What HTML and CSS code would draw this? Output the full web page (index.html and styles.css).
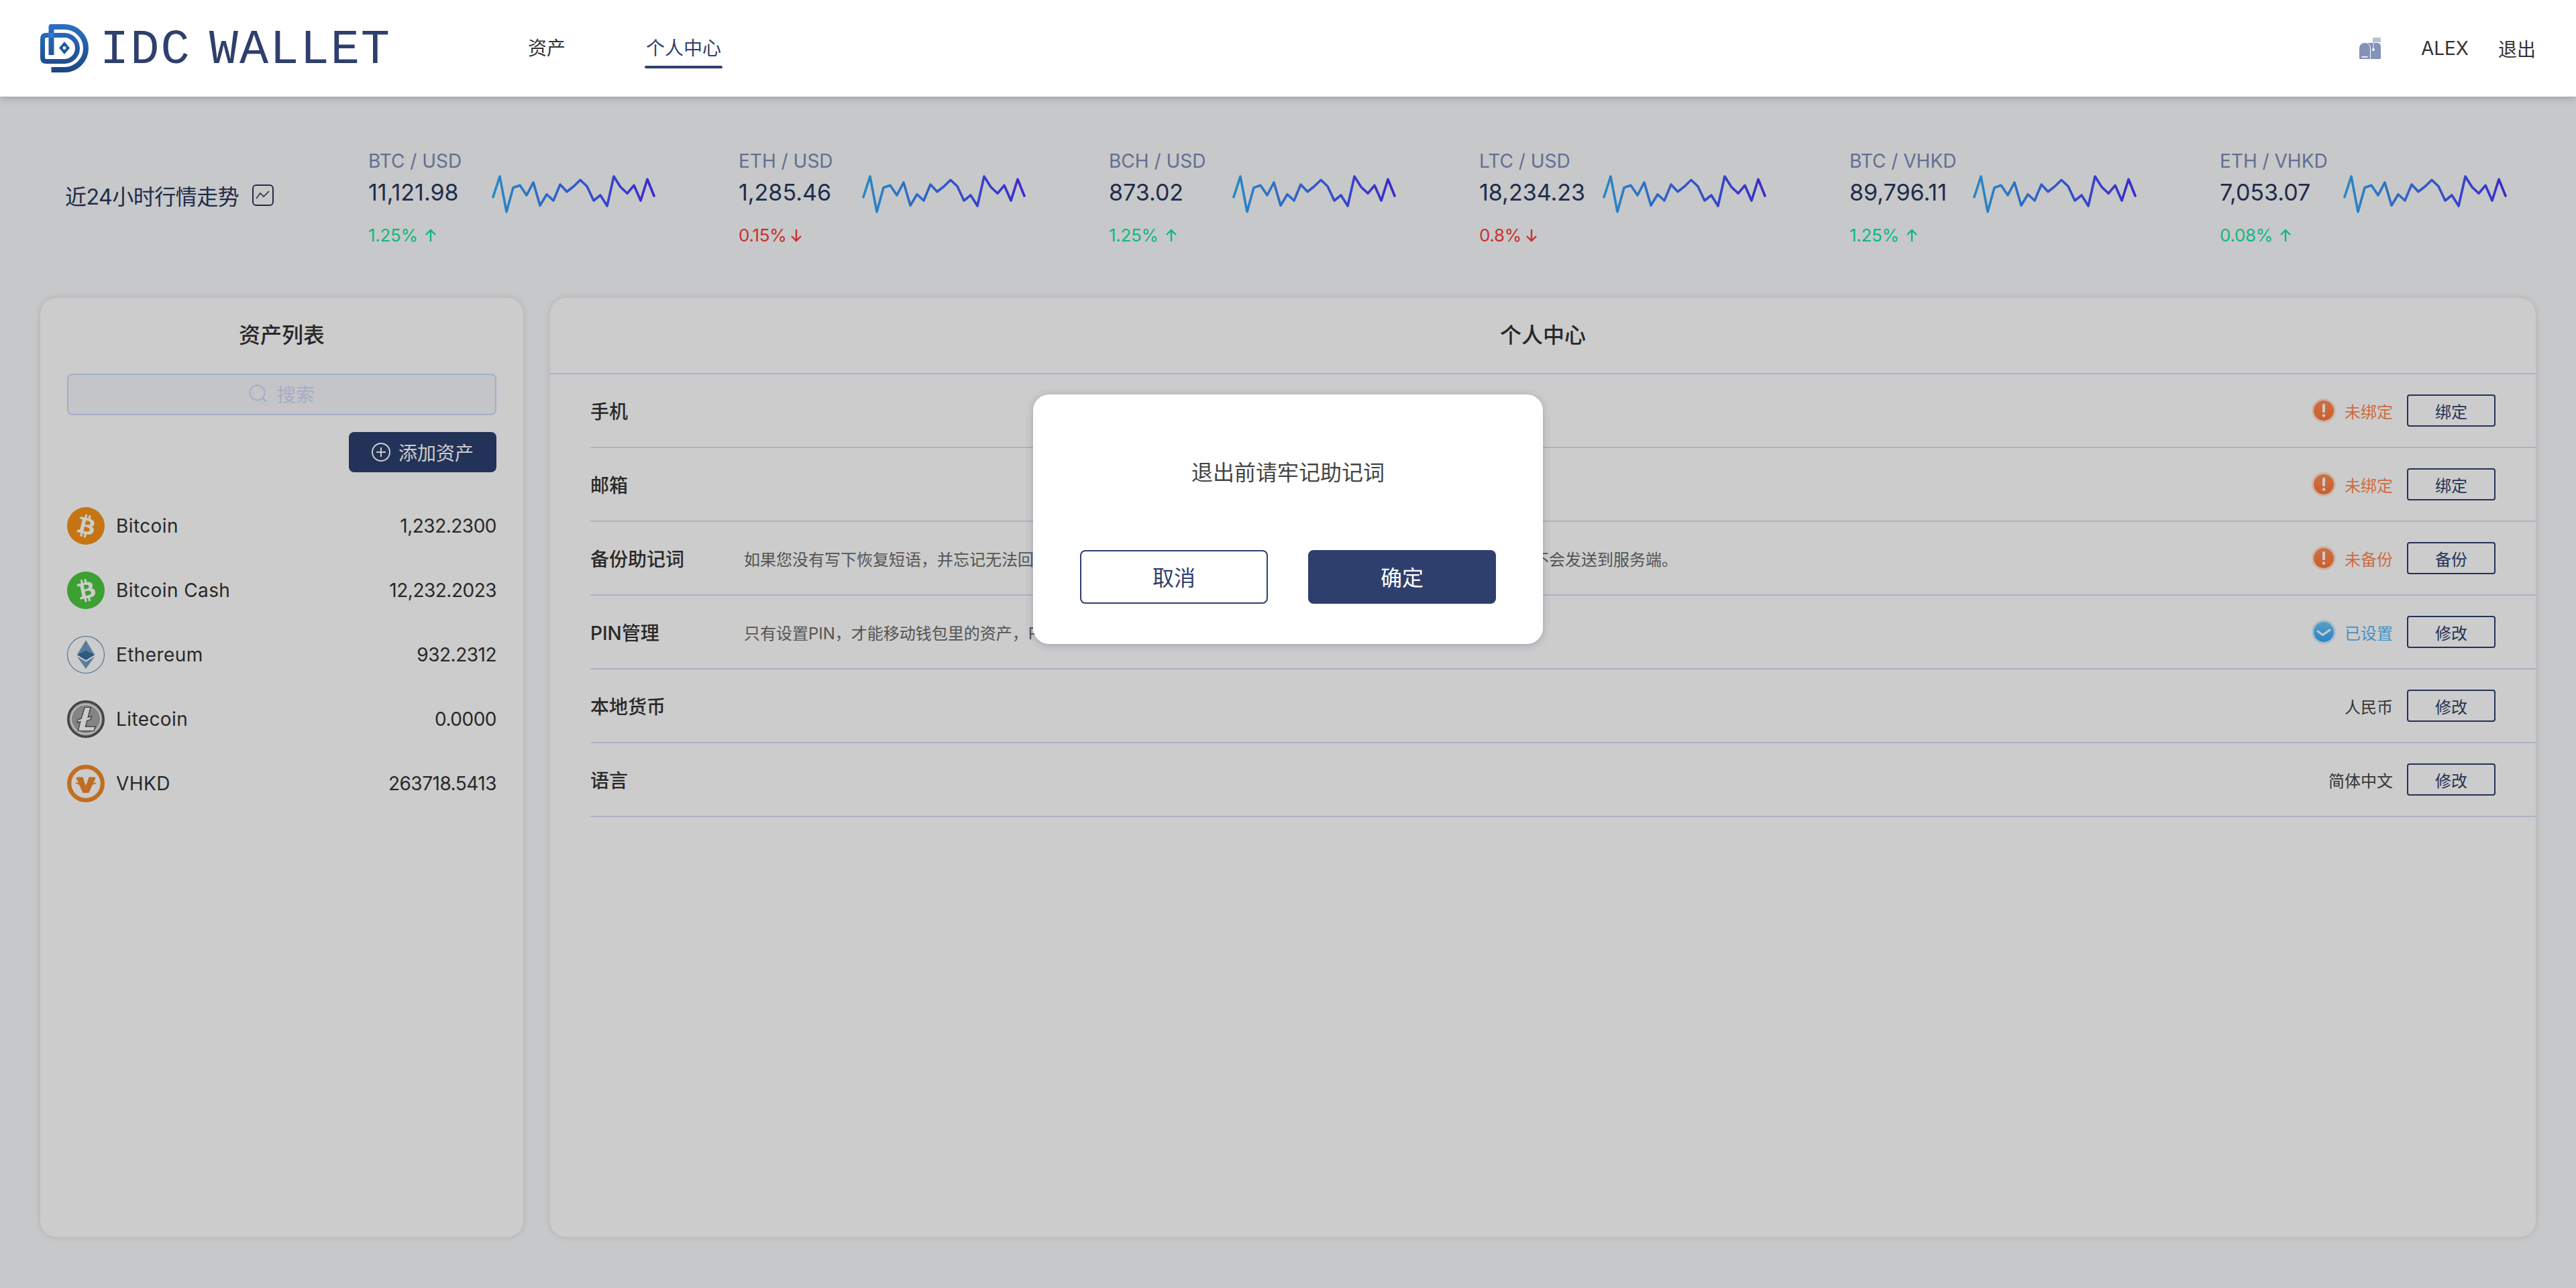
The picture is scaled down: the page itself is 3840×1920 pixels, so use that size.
FILE: index.html
```html
<!DOCTYPE html>
<html lang="zh-CN">

<head>
    <meta charset="UTF-8">
    <title>IDC Wallet</title>
    <link rel="stylesheet" href="styles.css">
</head>

<body>
    <svg class="defs" width="0" height="0">
        <defs>
            <linearGradient id="sparkGrad" gradientUnits="userSpaceOnUse" x1="0" y1="0" x2="244" y2="0">
                <stop offset="0" stop-color="#33acf5" />
                <stop offset="1" stop-color="#4a34ff" />
            </linearGradient>
            <linearGradient id="logoGrad" gradientUnits="userSpaceOnUse" x1="0" y1="0" x2="0" y2="72">
                <stop offset="0" stop-color="#2a70c6" />
                <stop offset="1" stop-color="#1a4780" />
            </linearGradient>
            <linearGradient id="warnGrad" x1="0" y1="0" x2="0" y2="1">
                <stop offset="0" stop-color="#ff8e56" />
                <stop offset="1" stop-color="#ff7636" />
            </linearGradient>
            <linearGradient id="okGrad" x1="0" y1="0" x2="0" y2="1">
                <stop offset="0" stop-color="#74c4f6" />
                <stop offset="1" stop-color="#32a8f8" />
            </linearGradient>
            <symbol id="spark" viewBox="0 0 244 58">
                <polyline fill="none" stroke="url(#sparkGrad)" stroke-width="3.6" stroke-linecap="round"
                    stroke-linejoin="round"
                    points="2,33.7 12,3 22,55.7 32,19.7 42,16.3 52,31 62,12 72,46.3 82,29.7 92,39 102,15 112,25.7 122,18 132,8.3 142,17.7 152,39 162,31 172,47 182,3 192,18.7 202,28.3 212,16.3 222,39 232,7.3 242,32" />
            </symbol>
            <symbol id="arrowUp" viewBox="0 0 18 20">
                <path d="M9 19V2M2 9l7-7 7 7" fill="none" stroke="currentColor" stroke-width="2.4" />
            </symbol>
            <symbol id="arrowDown" viewBox="0 0 18 20">
                <path d="M9 1v17M2 11l7 7 7-7" fill="none" stroke="currentColor" stroke-width="2.4" />
            </symbol>
            <symbol id="warn" viewBox="0 0 36 36">
                <circle cx="18" cy="18" r="18" fill="#ff8a50" opacity=".25" />
                <circle cx="18" cy="18" r="15" fill="url(#warnGrad)" />
                <rect x="16" y="8" width="4" height="13" rx="1.6" fill="#fff" />
                <circle cx="18" cy="25.5" r="2.2" fill="#fff" />
            </symbol>
            <symbol id="ok" viewBox="0 0 36 36">
                <circle cx="18" cy="18" r="18" fill="#55b8fa" opacity=".25" />
                <circle cx="18" cy="18" r="15" fill="url(#okGrad)" />
                <path d="M9 17l7.500 5.500L27 15" fill="none" stroke="#fff" stroke-width="2.800" stroke-linecap="round"
                    stroke-linejoin="round" />
            </symbol>
            <path id="btcB"
                d="M23.189 14.02c.314-2.096-1.283-3.223-3.465-3.975l.708-2.84-1.728-.43-.69 2.765c-.454-.114-.92-.22-1.385-.326l.695-2.783L15.596 6l-.708 2.839c-.376-.086-.746-.17-1.104-.26l.002-.009-2.384-.595-.46 1.846s1.283.294 1.256.312c.7.175.826.638.805 1.006l-.806 3.235c.048.012.11.03.18.057l-.183-.045-1.13 4.532c-.086.212-.303.531-.793.41.018.025-1.256-.313-1.256-.313l-.858 1.978 2.25.561c.418.105.828.215 1.231.318l-.715 2.872 1.727.43.708-2.84c.472.127.93.245 1.378.357l-.706 2.828 1.728.43.715-2.866c2.948.558 5.164.333 6.097-2.333.752-2.146-.037-3.385-1.588-4.192 1.13-.26 1.98-1.003 2.207-2.538zm-3.95 5.538c-.533 2.147-4.148.986-5.32.695l.95-3.805c1.172.293 4.929.872 4.37 3.11zm.535-5.569c-.487 1.953-3.495.96-4.47.717l.86-3.45c.975.243 4.118.696 3.61 2.733z" />
        </defs>
    </svg>

    <header class="topbar">
        <div class="brand">
            <svg class="brand-mark" viewBox="0 0 72 72">
                <path d="M16.5 46V4H36a32 32 0 0 1 0 64H16.5" fill="none" stroke="url(#logoGrad)" stroke-width="8"
                    stroke-linejoin="round" />
                <path d="M36 55.5H9Q3.5 55.5 3.5 50V22Q3.5 16.5 9 16.5H36a19.5 19.5 0 0 1 0 39" fill="none"
                    stroke="url(#logoGrad)" stroke-width="7" />
                <rect x="12.5" y="13" width="8" height="7" fill="#3278d8" />
                <path d="M36 26l8 9.5-8 9.5-8-9.5z" fill="#1f5a9f" />
                <circle cx="36" cy="35.5" r="2.4" fill="#fff" />
            </svg>
            <span class="brand-name">IDC WALLET</span>
        </div>
        <nav class="nav">
            <a class="nav-item">资产</a>
            <a class="nav-item nav-active">个人中心</a>
        </nav>
        <div class="user">
            <svg class="mailbox" viewBox="0 0 32 32">
                <path d="M20.5 0h10a1.5 1.5 0 0 1 1.5 1.5V7h-11.500z" fill="#b6c0da" />
                <path d="M0 30.500V16a8 8 0 0 1 15-3.800q1 1.800 1 3.800v16H1.500A1.500 1.500 0 0 1 0 30.500z" fill="#8492b8" />
                <path d="M12 8h8v8.500a1.900 1.900 0 1 0 2 0V8h5a5 5 0 0 1 5 5v17.500a1.500 1.500 0 0 1-1.500 1.500H17V16q0-4.500-5-8z"
                    fill="#8492b8" />
                <rect x="20" y="1" width="2" height="15" fill="#b6c0da" />
                <rect x="3.500" y="28" width="9" height="1.600" fill="#fff" />
            </svg>
            <span class="user-name">ALEX</span>
            <a class="logout">退出</a>
        </div>
    </header>

    <section class="market">
        <div class="market-title">
            <span>近24小时行情走势</span>
            <svg class="trend-icon" viewBox="0 0 32 32">
                <rect x="1" y="1" width="30" height="30" rx="5" fill="none" stroke="currentColor" stroke-width="2" />
                <path d="M6 21l6-8 5 5 8-8" fill="none" stroke="currentColor" stroke-width="1.600" />
            </svg>
        </div>
        <div class="ticker">
            <div class="pair">BTC / USD</div>
            <div class="quote"><span class="price">11,121.98</span><svg class="spark"><use href="#spark" /></svg></div>
            <div class="change up">1.25%<svg class="arrow"><use href="#arrowUp" /></svg></div>
        </div>
        <div class="ticker">
            <div class="pair">ETH / USD</div>
            <div class="quote"><span class="price">1,285.46</span><svg class="spark"><use href="#spark" /></svg></div>
            <div class="change down">0.15%<svg class="arrow"><use href="#arrowDown" /></svg></div>
        </div>
        <div class="ticker">
            <div class="pair">BCH / USD</div>
            <div class="quote"><span class="price">873.02</span><svg class="spark"><use href="#spark" /></svg></div>
            <div class="change up">1.25%<svg class="arrow"><use href="#arrowUp" /></svg></div>
        </div>
        <div class="ticker">
            <div class="pair">LTC / USD</div>
            <div class="quote"><span class="price">18,234.23</span><svg class="spark"><use href="#spark" /></svg></div>
            <div class="change down">0.8%<svg class="arrow"><use href="#arrowDown" /></svg></div>
        </div>
        <div class="ticker">
            <div class="pair">BTC / VHKD</div>
            <div class="quote"><span class="price">89,796.11</span><svg class="spark"><use href="#spark" /></svg></div>
            <div class="change up">1.25%<svg class="arrow"><use href="#arrowUp" /></svg></div>
        </div>
        <div class="ticker">
            <div class="pair">ETH / VHKD</div>
            <div class="quote"><span class="price">7,053.07</span><svg class="spark"><use href="#spark" /></svg></div>
            <div class="change up">0.08%<svg class="arrow"><use href="#arrowUp" /></svg></div>
        </div>
    </section>

    <main class="content">
        <aside class="panel assets">
            <h2 class="assets-title">资产列表</h2>
            <div class="search">
                <svg class="search-icon" viewBox="0 0 28 28">
                    <circle cx="12.500" cy="12.500" r="11" fill="none" stroke="currentColor" stroke-width="2" />
                    <path d="M21 21l5 5" fill="none" stroke="currentColor" stroke-width="2.400" />
                </svg>
                <span>搜索</span>
            </div>
            <div class="add-wrap">
                <button class="add-btn">
                    <svg class="add-icon" viewBox="0 0 28 28">
                        <circle cx="14" cy="14" r="13" fill="none" stroke="currentColor" stroke-width="2" />
                        <path d="M14 7v14M7 14h14" fill="none" stroke="currentColor" stroke-width="2" />
                    </svg>
                    添加资产
                </button>
            </div>
            <ul class="asset-list">
                <li class="asset">
                    <svg class="coin" viewBox="0 0 32 32">
                        <circle cx="16" cy="16" r="16" fill="#f7931a" />
                        <use href="#btcB" fill="#fff" />
                    </svg>
                    <span class="asset-name">Bitcoin</span>
                    <span class="asset-amount">1,232.2300</span>
                </li>
                <li class="asset">
                    <svg class="coin" viewBox="0 0 32 32">
                        <circle cx="16" cy="16" r="16" fill="#4bc93f" />
                        <use href="#btcB" fill="#fff" transform="rotate(-26 16 16)" />
                    </svg>
                    <span class="asset-name">Bitcoin Cash</span>
                    <span class="asset-amount">12,232.2023</span>
                </li>
                <li class="asset">
                    <svg class="coin" viewBox="0 0 32 32">
                        <circle cx="16" cy="16" r="15.700" fill="#fff" stroke="#5a86ac" stroke-width=".6" />
                        <path d="M16 3.500L8.500 16 16 20.500 23.500 16z" fill="#6d9dc6" />
                        <path d="M16 12.500L8.500 16 16 20.500 23.500 16z" fill="#3f6f99" />
                        <path d="M8.500 17.500L16 22l7.500-4.500L16 28z" fill="#6d9dc6" />
                    </svg>
                    <span class="asset-name">Ethereum</span>
                    <span class="asset-amount">932.2312</span>
                </li>
                <li class="asset">
                    <svg class="coin" viewBox="0 0 32 32">
                        <circle cx="16" cy="16" r="15" fill="#bdbdbd" stroke="#555" stroke-width="2" />
                        <circle cx="16" cy="16" r="12.500" fill="#a6a6a6" stroke="#fff" stroke-width=".8" />
                        <path d="M15 6h5l-2.200 8.500 3-1-.8 2.800-3 1-1.300 5H24l-1 3.700H9.300l2-8-2.700 1 .7-2.600 2.800-1z"
                            fill="#fff" stroke="#444" stroke-width=".7" />
                    </svg>
                    <span class="asset-name">Litecoin</span>
                    <span class="asset-amount">0.0000</span>
                </li>
                <li class="asset">
                    <svg class="coin" viewBox="0 0 32 32">
                        <circle cx="16" cy="16" r="14.200" fill="#fff" stroke="#f08a2a" stroke-width="3.600" />
                        <path d="M8 10.500h5.500l2.500 8 2.500-8H24v1.500l-5.500 12h-5L8 12z" fill="#f08a2a" />
                        <path d="M7.500 15.500q8.500 4 17 0" fill="none" stroke="#f08a2a" stroke-width="1" />
                    </svg>
                    <span class="asset-name">VHKD</span>
                    <span class="asset-amount">263718.5413</span>
                </li>
            </ul>
        </aside>

        <section class="panel profile">
            <h2 class="profile-title">个人中心</h2>
            <div class="row">
                <span class="row-name">手机</span>
                <span class="row-desc"></span>
                <svg class="status-icon"><use href="#warn" /></svg>
                <span class="status warn">未绑定</span>
                <button class="small-btn">绑定</button>
            </div>
            <div class="row">
                <span class="row-name">邮箱</span>
                <span class="row-desc"></span>
                <svg class="status-icon"><use href="#warn" /></svg>
                <span class="status warn">未绑定</span>
                <button class="small-btn">绑定</button>
            </div>
            <div class="row">
                <span class="row-name">备份助记词</span>
                <span class="row-desc">如果您没有写下恢复短语，并忘记无法回复您的钱包，请务必妥善保管好助记词，助记词仅保存在您的设备上，不会发送到服务端。</span>
                <svg class="status-icon"><use href="#warn" /></svg>
                <span class="status warn">未备份</span>
                <button class="small-btn">备份</button>
            </div>
            <div class="row">
                <span class="row-name">PIN管理</span>
                <span class="row-desc">只有设置PIN，才能移动钱包里的资产，PIN码用于保护您的资产安全。</span>
                <svg class="status-icon"><use href="#ok" /></svg>
                <span class="status ok">已设置</span>
                <button class="small-btn">修改</button>
            </div>
            <div class="row">
                <span class="row-name">本地货币</span>
                <span class="row-desc"></span>
                <span class="status">人民币</span>
                <button class="small-btn">修改</button>
            </div>
            <div class="row">
                <span class="row-name">语言</span>
                <span class="row-desc"></span>
                <span class="status">简体中文</span>
                <button class="small-btn">修改</button>
            </div>
        </section>
    </main>

    <div class="overlay">
        <div class="dialog">
            <p class="dialog-text">退出前请牢记助记词</p>
            <div class="dialog-actions">
                <button class="dialog-btn cancel">取消</button>
                <button class="dialog-btn confirm">确定</button>
            </div>
        </div>
    </div>
</body>

</html>
```
FILE: styles.css
```css
* {
    box-sizing: border-box;
}

body {
    margin: 0;
    width: 3840px;
    height: 1920px;
    overflow: hidden;
    position: relative;
    background-color: #f9fafc;
    color: #333;
    font-family: Inter, "Noto Sans CJK SC", sans-serif;
}

.defs {
    position: absolute;
}

button {
    font-family: inherit;
    cursor: pointer;
}

/* top bar */
.topbar {
    position: relative;
    z-index: 10;
    display: flex;
    align-items: center;
    height: 144px;
    padding: 0 60px;
    background-color: #fff;
    box-shadow: 0 3px 10px rgba(50, 50, 80, 0.25);
}

.brand {
    display: flex;
    align-items: center;
    width: 727px;
}

.brand-mark {
    width: 72px;
    height: 72px;
    margin-right: 17px;
}

.brand-name {
    padding-top: 5px;
    font-family: "Liberation Mono", monospace;
    font-size: 72px;
    line-height: 72px;
    letter-spacing: 2px;
    word-spacing: -18px;
    color: #2f3f6d;
}

.nav {
    display: flex;
    gap: 120px;
}

.nav-item {
    position: relative;
    font-size: 28px;
    line-height: 40px;
    color: #333;
}

.nav-active {
    color: #2f3f6d;
}

.nav-active::after {
    content: "";
    position: absolute;
    left: -2px;
    right: -2px;
    bottom: -10px;
    height: 4px;
    border-radius: 2px;
    background-color: #2f3f6d;
}

.user {
    display: flex;
    align-items: center;
    margin-left: auto;
    font-size: 28px;
}

.mailbox {
    width: 32px;
    height: 32px;
    margin-right: 60px;
}

.user-name {
    margin-right: 44px;
}

/* market strip */
.market {
    display: grid;
    grid-template-columns: 452px repeat(5, 552px) 1fr;
    height: 300px;
    padding: 76px 0 0 97px;
}

.market-title {
    display: flex;
    align-items: center;
    gap: 20px;
    height: 100px;
    padding-top: 42px;
    font-size: 32px;
    letter-spacing: -0.5px;
    color: #28375f;
}

.trend-icon {
    width: 32px;
    height: 32px;
}

.pair {
    font-size: 28px;
    line-height: 40px;
    color: #7b8bb8;
}

.quote {
    display: flex;
    align-items: center;
    height: 58px;
}

.price {
    width: 184px;
    font-size: 34px;
    line-height: 44px;
    color: #28375f;
    margin-top: -5px;
}

.spark {
    width: 244px;
    height: 58px;
}

.change {
    display: flex;
    align-items: center;
    margin-top: 15px;
    font-size: 26px;
    line-height: 36px;
    letter-spacing: -0.3px;
}

.up {
    color: #13e6a3;
    gap: 10px;
}

.down {
    color: #fa3c3b;
    gap: 6px;
}

.arrow {
    width: 18px;
    height: 20px;
}

/* panels */
.content {
    display: flex;
    gap: 40px;
    height: 1400px;
    padding: 0 60px;
}

.panel {
    background-color: #fff;
    border-radius: 24px;
    box-shadow: 0 0 10px rgba(30, 30, 60, 0.14);
}

.assets {
    flex: 0 0 720px;
    padding: 0 40px;
}

.assets-title,
.profile-title {
    margin: 0;
    height: 113px;
    line-height: 112px;
    font-size: 32px;
    font-weight: 500;
    text-align: center;
    color: #333;
}

.search {
    display: flex;
    align-items: center;
    justify-content: center;
    gap: 14px;
    height: 62px;
    padding-bottom: 3px;
    border: 2px solid #ced9f8;
    border-radius: 8px;
    background-color: #f6f7fc;
    font-size: 28px;
    color: #cfd9f7;
}

.search-icon {
    width: 28px;
    height: 28px;
}

.add-wrap {
    display: flex;
    justify-content: flex-end;
    margin-top: 25px;
}

.add-btn {
    display: flex;
    align-items: center;
    justify-content: center;
    gap: 12px;
    width: 220px;
    height: 60px;
    border: none;
    border-radius: 8px;
    background-color: #2c3f6e;
    color: #fff;
    font-size: 28px;
}

.add-icon {
    width: 28px;
    height: 28px;
}

.asset-list {
    list-style: none;
    margin: 32px 0 0;
    padding: 0;
}

.asset {
    display: flex;
    align-items: center;
    height: 96px;
    font-size: 28px;
    color: #333;
}

.coin {
    width: 56px;
    height: 56px;
    margin-right: 17px;
}

.asset-name {
    letter-spacing: 0.4px;
}

.asset-amount {
    margin-left: auto;
    letter-spacing: -0.5px;
}

.profile {
    flex: 1;
}

.profile-title {
    height: 114px;
    border-bottom: 2px solid #d2dcfb;
}

.row {
    display: flex;
    align-items: center;
    height: 110px;
    margin-left: 60px;
    padding-right: 60px;
    border-bottom: 2px solid #d9dff5;
}

.row-name {
    width: 229px;
    font-size: 28px;
    font-weight: 500;
    color: #333;
}

.row-desc {
    flex: 1;
    font-size: 24px;
    color: #6a6a6a;
}

.status-icon {
    width: 36px;
    height: 36px;
    margin-right: 13px;
}

.status {
    margin-right: 21px;
    font-size: 24px;
    color: #444;
}

.status.warn {
    color: #ff8a50;
}

.status.ok {
    color: #55b8f5;
}

.small-btn {
    width: 132px;
    height: 48px;
    padding: 0;
    border: 2px solid #2f3f6d;
    border-radius: 4px;
    background: transparent;
    color: #2f3f6d;
    font-size: 24px;
}

/* dialog */
.overlay {
    position: absolute;
    inset: 0;
    z-index: 5;
    display: flex;
    justify-content: center;
    align-items: flex-start;
    padding-top: 588px;
    background-color: rgba(0, 0, 0, 0.2);
}

.dialog {
    width: 760px;
    height: 372px;
    padding: 0 70px;
    border-radius: 24px;
    background-color: #fff;
    box-shadow: 0 2px 12px rgba(40, 50, 90, 0.25);
}

.dialog-text {
    margin: 0;
    height: 232px;
    padding-top: 93px;
    font-size: 32px;
    line-height: 48px;
    text-align: center;
    color: #444;
}

.dialog-actions {
    display: flex;
    justify-content: space-between;
}

.dialog-btn {
    width: 280px;
    height: 80px;
    padding-bottom: 4px;
    border: 2px solid #2f3f6d;
    border-radius: 8px;
    font-size: 32px;
}

.cancel {
    background-color: #fff;
    color: #2f3f6d;
}

.confirm {
    background-color: #2f3f6d;
    color: #fff;
}
```
